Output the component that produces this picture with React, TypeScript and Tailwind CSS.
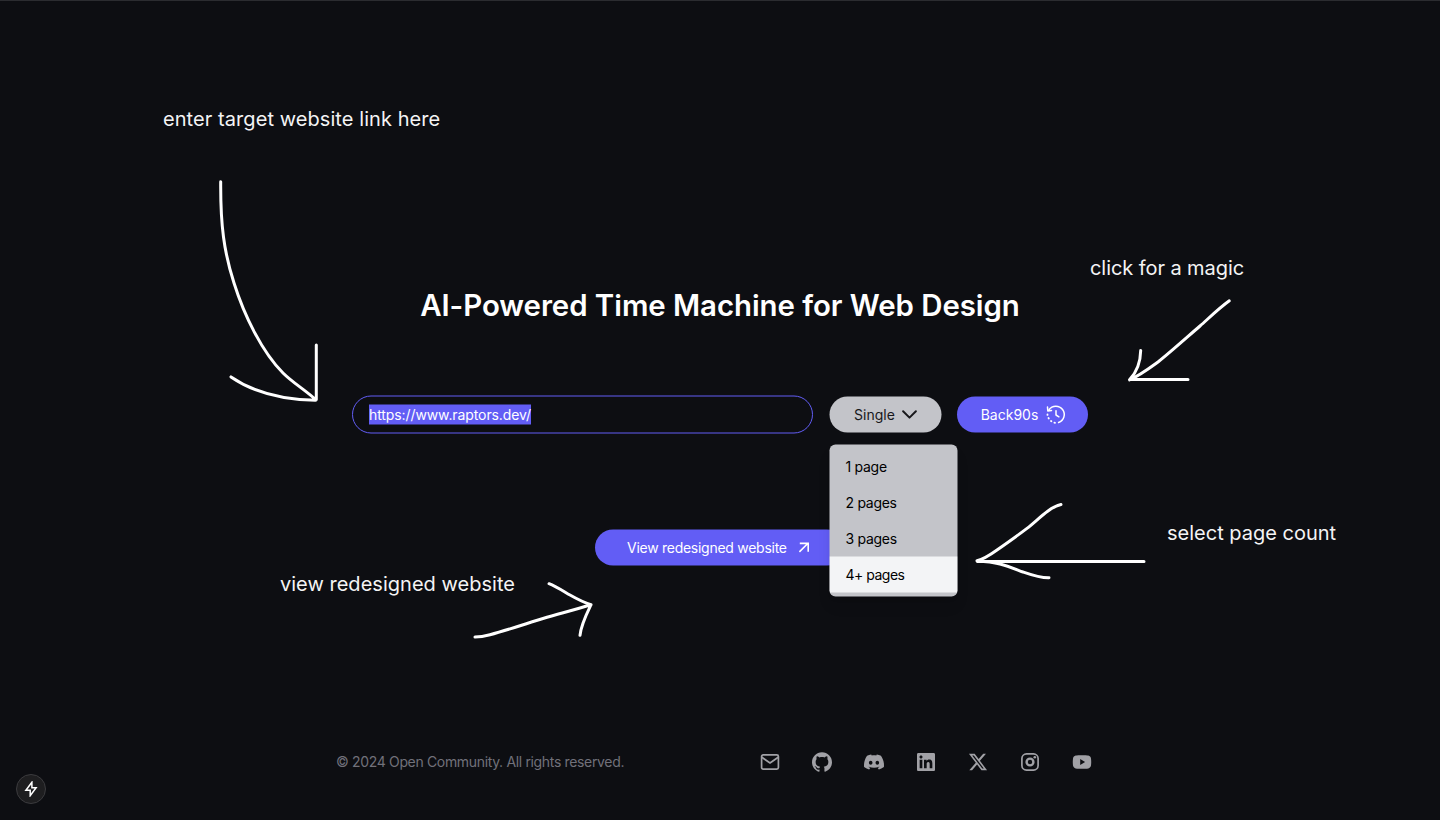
import React from "react";
import { SiDiscord, SiGithub } from "react-icons/si";
import { RiLinkedinBoxFill, RiTwitterXFill } from "react-icons/ri";

const pageOptions = ["1 page", "2 pages", "3 pages", "4+ pages"];

function MailIcon() {
  return (
    <svg viewBox="0 0 24 24" className="size-6" fill="none" stroke="currentColor" strokeWidth="1.7" strokeLinejoin="round">
      <rect x="3.6" y="4.8" width="16.8" height="14.4" rx="1.6" />
      <path d="M3.8 7.2 12 13l8.2-5.8" />
    </svg>
  );
}

function InstagramIcon() {
  return (
    <svg viewBox="0 0 24 24" className="size-6" fill="none" stroke="currentColor">
      <rect x="3.9" y="3.9" width="16.2" height="16.2" rx="4.6" strokeWidth="1.7" />
      <circle cx="12" cy="12" r="3.4" strokeWidth="2.4" />
      <circle cx="16.8" cy="7.3" r="1.3" fill="currentColor" stroke="none" />
    </svg>
  );
}

function YoutubeIcon() {
  return (
    <svg viewBox="0 0 24 24" className="size-6" fill="currentColor" fillRule="evenodd">
      <path d="M12 5.2c3 0 5 .1 6.300.4 1.500.4 2.400 1.400 2.700 2.900.3 2.300.3 4.700 0 7-.3 1.500-1.200 2.500-2.700 2.900-3.200.6-9.400.6-12.600 0C4.200 18 3.300 17 3 15.500c-.3-2.300-.3-4.700 0-7 .3-1.500 1.200-2.500 2.700-2.900C7 5.300 9 5.200 12 5.200ZM10.200 9.100v5.800l4.900-2.900Z" />
    </svg>
  );
}

function HistoryIcon() {
  return (
    <svg viewBox="0 0 20 20" className="size-5" fill="none" stroke="currentColor" strokeWidth="1.5" strokeLinecap="round" strokeLinejoin="round">
      <path d="M3 5.2A8.4 8.4 0 1 1 12.6 18" />
      <path d="M1.5 2.6l.3 3.8 3.7-.4" />
      <path d="M10 6.3v4.2l2.9 1.8" />
      <path d="M1.5 9.9v.5M2.5 13.5l.3.5M5 16.5l.4.3M8.4 18.2l.6.1" strokeWidth="1.8" />
    </svg>
  );
}

function ArrowUpRightIcon() {
  return (
    <svg viewBox="0 0 16 16" className="size-4" fill="none" stroke="currentColor" strokeWidth="1.6">
      <path d="M3.4 12.4 12 3.8M3.8 3.9h8.4v8.4" />
    </svg>
  );
}

function ChevronIcon() {
  return (
    <svg viewBox="0 0 16 16" className="size-4" fill="none" stroke="currentColor" strokeWidth="2" strokeLinecap="round" strokeLinejoin="round">
      <path d="M1.6 4.7 8 11.1l6.4-6.4" />
    </svg>
  );
}

function PageSelect() {
  return (
    <div className="relative translate-x-[0.5px]">
      <button className="flex h-9 w-28 items-center justify-center gap-[7px] rounded-full bg-[#c3c4c9] pl-px text-sm text-[#18181b]">
        Single
        <ChevronIcon />
      </button>
      <ul className="absolute top-12 left-0 z-10 w-32 overflow-hidden rounded-md bg-[#c3c4c9] py-1 text-sm text-black shadow-lg">
        {pageOptions.map((option, i) => (
          <li
            key={option}
            className={
              i === 3
                ? "h-9 bg-[#f3f4f6] px-4 leading-9 tracking-[-0.5px]"
                : "h-9 px-4 leading-9 tracking-[-0.28px]"
            }
          >
            {option}
          </li>
        ))}
      </ul>
    </div>
  );
}

function HandArrows() {
  return (
    <svg
      viewBox="0 0 1440 820"
      className="pointer-events-none absolute -top-px left-0 h-[820px] w-[1440px]"
      fill="none"
      stroke="white"
      strokeWidth="3"
      strokeLinecap="round"
      strokeLinejoin="round"
    >
      <path d="M220.7 181.8C220.4 225 224 252 234 283C244 315 262 352 283 373C293 383 306 390.5 316 400M316.3 345V399.5M231 376.9C253 392 280 399.5 315.5 400.3" />
      <path d="M1229.3 300.8C1218 309 1208 319 1200 326C1185 339 1170 352.5 1158 362C1147 370 1139 376 1129.5 379.8M1140.7 350.5C1140.5 362 1136 373 1129.5 379.8M1130 379.4H1188" />
      <path d="M1061 504.5C1056.5 505.5 1052 508 1048 511C1041 516 1034 523 1027 528.4C1017 536 1007 543 997 550C990 555 983 559.5 977 560.7M977.5 561.4H1144M977 561C985 561.4 992 562 1000 564C1008 566 1015 569 1023 572C1033 575.5 1040 578 1049 577.8" />
      <path d="M475 637.1C480 637 484 636.3 490 634.7C508 630 528 623 547 617.3C562 613 577 609 591 604.7M549 583.7C556 586.5 563 591 570 595C577 599 584 602.5 591 604.7M591 604.7C586.5 614 581 625 580 635.3" />
    </svg>
  );
}

const socials = [
  { name: "Mail", icon: <MailIcon /> },
  { name: "GitHub", icon: <SiGithub className="size-5" /> },
  { name: "Discord", icon: <SiDiscord className="size-5" /> },
  { name: "LinkedIn", icon: <RiLinkedinBoxFill className="size-6" /> },
  { name: "X", icon: <RiTwitterXFill className="size-[22px]" /> },
  { name: "Instagram", icon: <InstagramIcon /> },
  { name: "YouTube", icon: <YoutubeIcon /> },
];

export default function App() {
  return (
    <div className="relative h-[820px] overflow-hidden border-t border-[#2b2c30] bg-[#0d0e12] font-['Inter','Liberation_Sans',sans-serif] text-white">
      <main className="mx-auto flex h-[739px] w-[736px] translate-y-[0.5px] flex-col items-center pt-[286px]">
        <h1 className="text-[29.4px] leading-9 font-semibold tracking-[-0.04px] whitespace-nowrap">
          AI-Powered Time Machine for Web Design
        </h1>
        <div className="mt-[72px] flex w-full items-center gap-4">
          <div className="flex h-[38px] w-[461px] items-center rounded-full border border-[#625df5] px-4 text-sm">
            <span className="bg-[#625df5] leading-5 tracking-[-0.1px]">https://www.raptors.dev/</span>
          </div>
          <PageSelect />
          <button className="flex h-9 w-[131px] items-center justify-center gap-2 rounded-full bg-[#625df5] pl-0.5 text-sm">
            Back90s
            <HistoryIcon />
          </button>
        </div>
        <button className="mt-24 flex h-9 w-[250px] items-center gap-[9px] rounded-full bg-[#625df5] pl-8 text-sm tracking-[-0.27px] whitespace-nowrap">
          View redesigned website
          <ArrowUpRightIcon />
        </button>
      </main>

      <footer className="mx-auto flex h-11 w-[768px] items-center justify-between pr-[10px]">
        <p className="text-sm tracking-[-0.34px] text-[#71717a]">© 2024 Open Community. All rights reserved.</p>
        <nav className="flex items-center gap-7 text-[#a1a1a6]">
          {socials.map((s) => (
            <a key={s.name} aria-label={s.name} className="flex size-6 items-center justify-center">
              {s.icon}
            </a>
          ))}
        </nav>
      </footer>

      <HandArrows />
      <div className="pointer-events-none absolute inset-0 text-xl leading-6 font-normal whitespace-nowrap text-[#f4f4f5]">
        <p className="absolute top-[106px] left-[163px] tracking-[0.07px]">enter target website link here</p>
        <p className="absolute top-[255px] left-[1090px] tracking-[-0.07px]">click for a magic</p>
        <p className="absolute top-[520px] left-[1167px]">select page count</p>
        <p className="absolute top-[571px] left-[280px] tracking-[0.02px]">view redesigned website</p>
      </div>

      <div className="absolute top-[773px] left-4 flex size-[30px] items-center justify-center rounded-full border border-[#3b3b3e] bg-[#1e1e20]">
        <svg viewBox="0 0 16 16" className="size-4" fill="none" stroke="white" strokeWidth="1.5" strokeLinejoin="miter">
          <path d="M8.9 1.3 2.9 9.3H7.2V14.7L13.1 6.7H8.9Z" />
        </svg>
      </div>
    </div>
  );
}
